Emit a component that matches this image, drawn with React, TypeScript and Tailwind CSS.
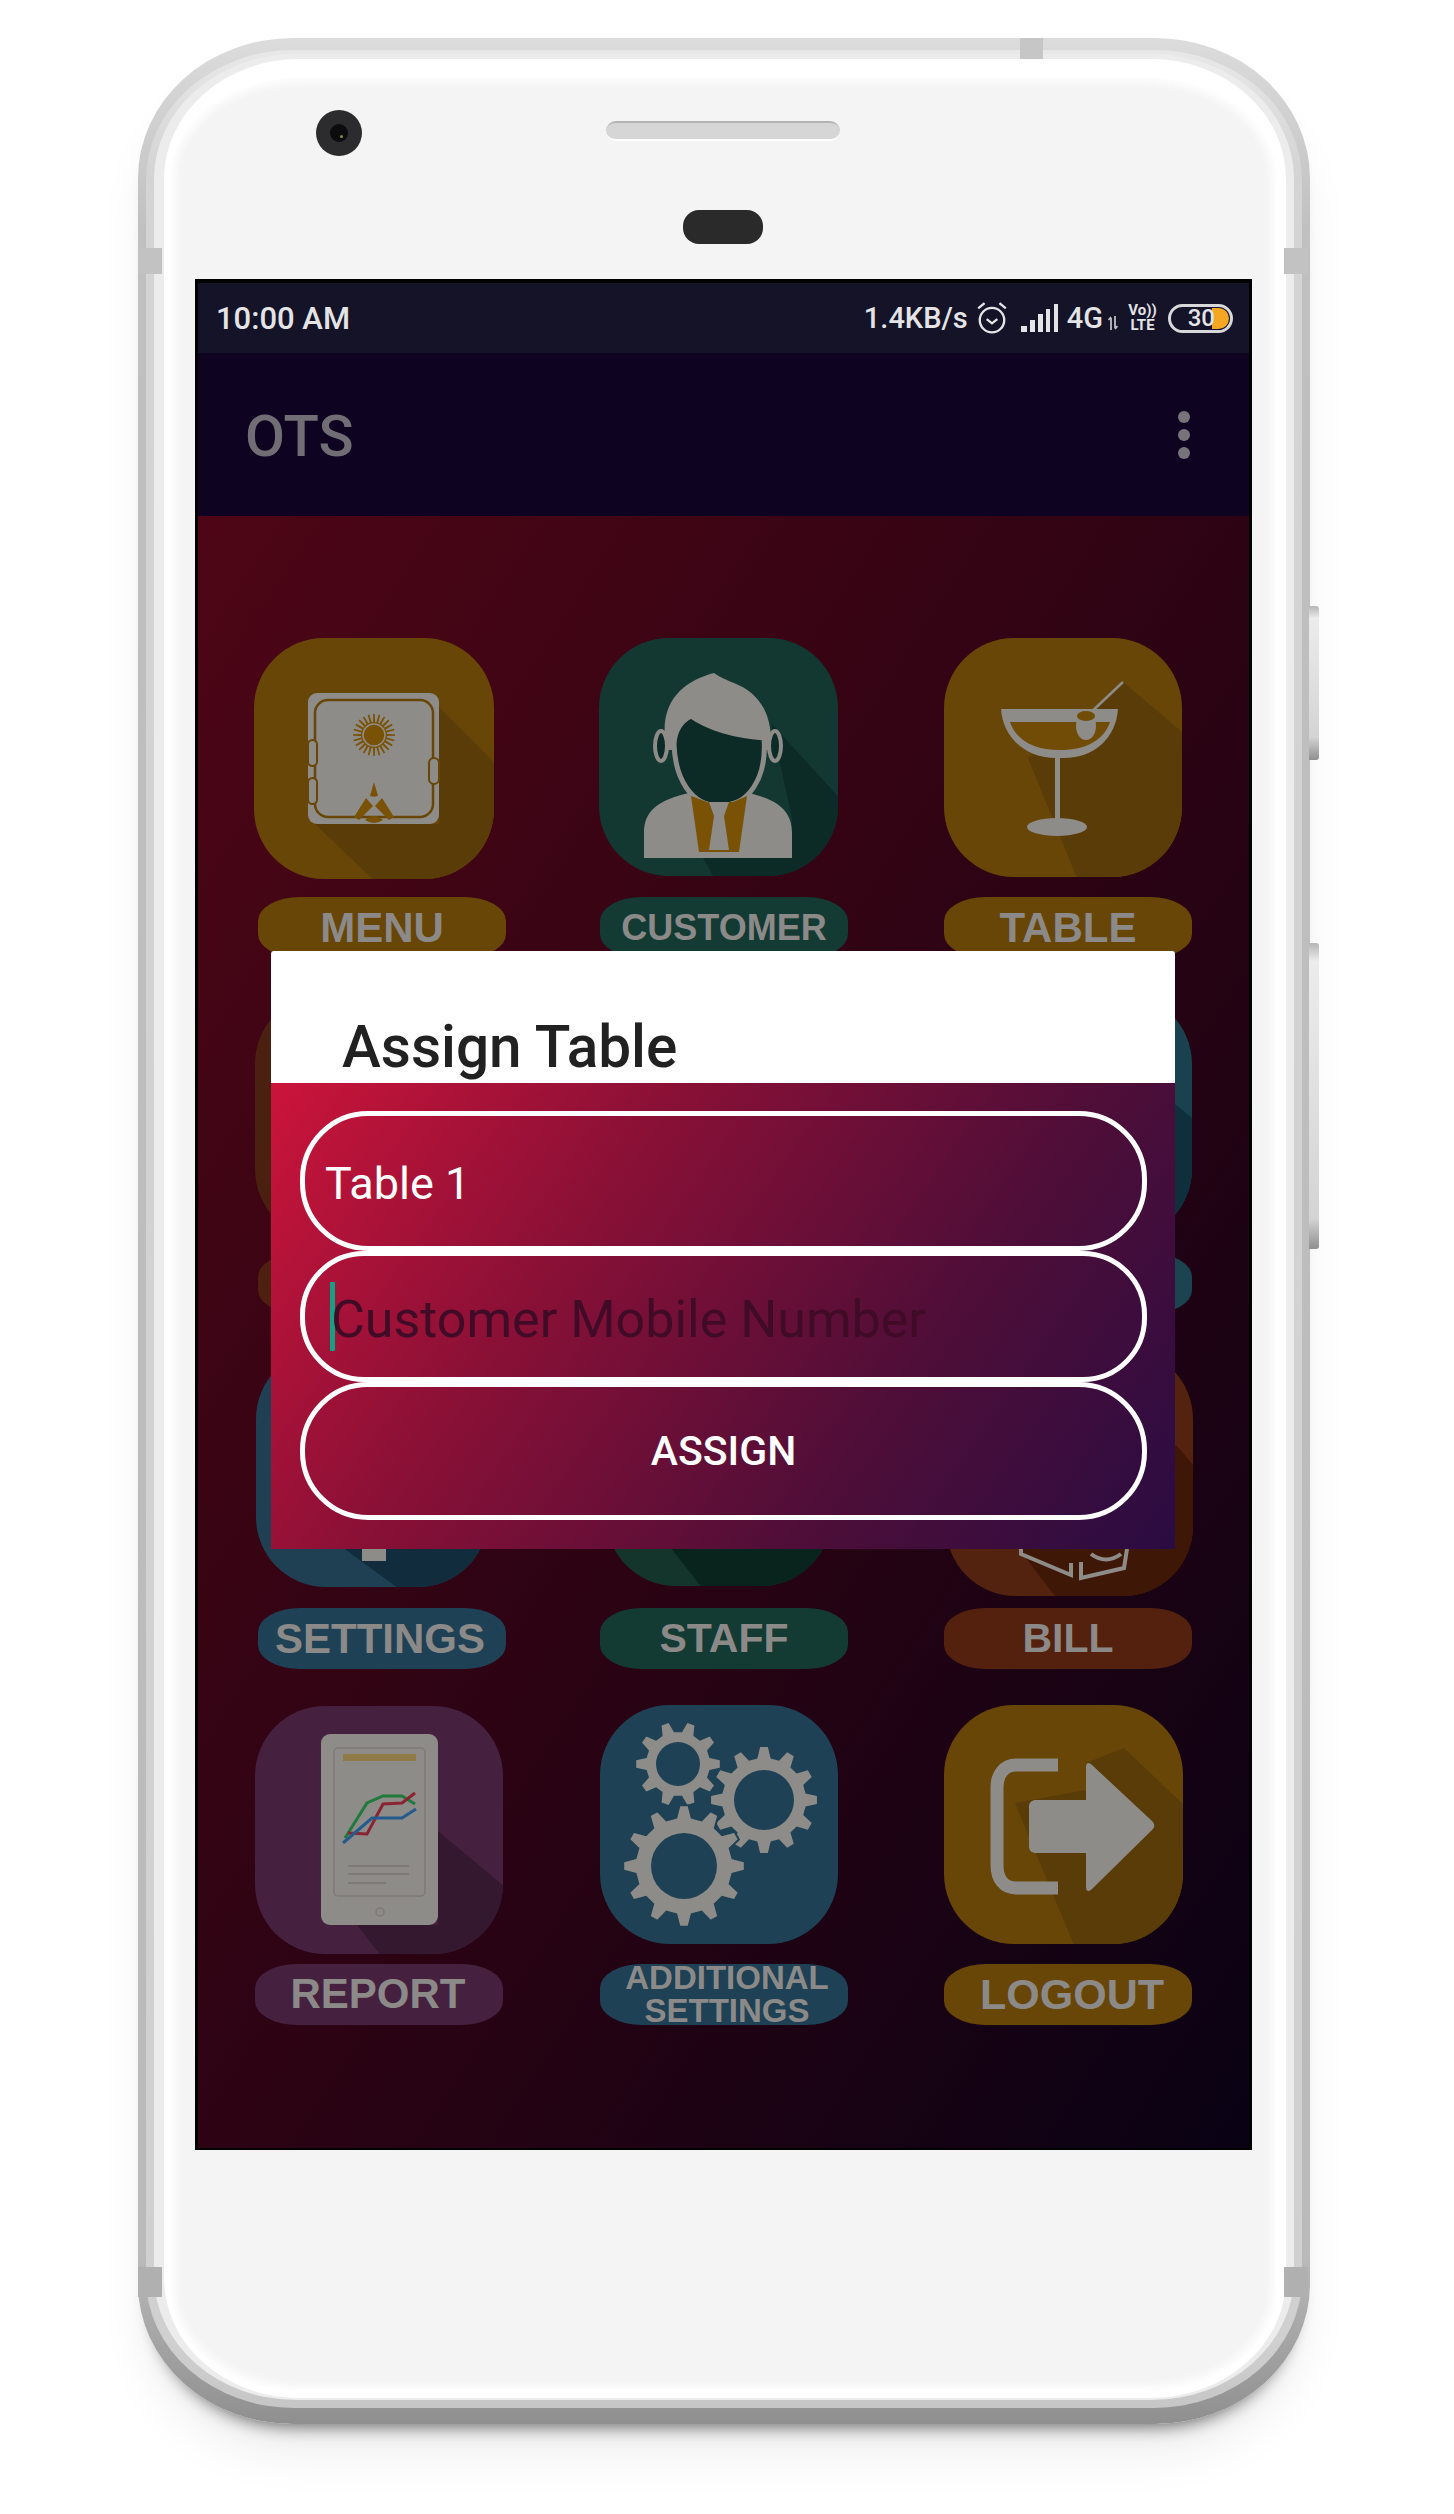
import React from "react";

const gearPath = (cx: number, cy: number, outer: number, inner: number, teeth: number) => {
  const step = (Math.PI * 2) / teeth;
  const pts: string[] = [];
  for (let i = 0; i < teeth; i++) {
    const a = i * step;
    const list: [number, number][] = [
      [a - step * 0.3, inner],
      [a - step * 0.14, outer],
      [a + step * 0.14, outer],
      [a + step * 0.3, inner],
    ];
    list.forEach(([ang, r]) => {
      pts.push(`${(cx + Math.cos(ang) * r).toFixed(1)} ${(cy + Math.sin(ang) * r).toFixed(1)}`);
    });
  }
  return `M${pts.join("L")}Z`;
};

const GREY = "#8e8c88";

const SafeIcon = () => (
  <svg viewBox="0 0 240 241" className="block h-full w-full">
    <polygon points="185,69 250,134 250,250 128,250 61,186 185,186" fill="#5a3c08" />
    <rect x="54" y="55" width="131" height="131" rx="9" fill={GREY} />
    <rect x="61" y="62" width="118" height="117" rx="13" fill="none" stroke="#684608" strokeWidth="2.5" />
    <rect x="54" y="102" width="9" height="26" rx="4.5" fill={GREY} stroke="#684608" strokeWidth="2" />
    <rect x="54" y="140" width="9" height="26" rx="4.5" fill={GREY} stroke="#684608" strokeWidth="2" />
    <rect x="175" y="120" width="10" height="26" rx="5" fill={GREY} stroke="#684608" strokeWidth="2" />
    <path d={gearPath(120, 97, 21, 13, 24)} fill="#7a5206" />
    <circle cx="120" cy="97" r="11" fill="none" stroke={GREY} strokeWidth="1.5" />
    <path d="M120 144l4 14a12 12 0 0 1 -8 0z M112 160l-12 19 5 3 14-14z M128 160l12 19-5 3-14-14z M111 182q9 -8 18 0q-9 6 -18 0z" fill="#7a5206" />
  </svg>
);

const CustomerIcon = () => (
  <svg viewBox="0 0 239 238" className="block h-full w-full">
    <polygon points="172,85 245,165 245,245 118,245 104,220 193,220 193,180" fill="#0d2b26" />
    <path d="M66 100C62 60 88 42 115 35C122 40 128 42 135 45C160 55 174 75 172 112L66 112Z" fill={GREY} />
    <ellipse cx="62" cy="108" rx="6" ry="15" fill="#0d2b26" stroke={GREY} strokeWidth="4" />
    <ellipse cx="176" cy="108" rx="6" ry="15" fill="#0d2b26" stroke={GREY} strokeWidth="4" />
    <path d="M75 106C76 90 84 82 92 78C112 92 140 98 165 100C168 140 150 168 120 168C92 168 76 140 75 106Z" fill="#0d2b26" stroke={GREY} strokeWidth="5" />
    <path d="M45 220V195C45 172 60 162 90 155C105 168 135 168 150 155C178 162 193 172 193 195V220Z" fill={GREY} />
    <path d="M92 158L100 214H140L148 158L134 164H108Z" fill="#7a5206" />
    <path d="M110 164H130L125 178L130 212H110L115 178Z" fill={GREY} />
  </svg>
);

const CocktailIcon = () => (
  <svg viewBox="0 0 238 239" className="block h-full w-full">
    <polygon points="179,44 245,100 245,245 135,245 84,120 142,79" fill="#5a3c08" />
    <path d="M57 71H174C172 100 150 120 120 120H112C82 120 59 100 57 71Z" fill={GREY} />
    <path d="M66 84H166C160 102 142 112 116 112C90 112 72 102 66 84Z" fill="#714c07" />
    <rect x="111" y="118" width="5" height="68" fill={GREY} />
    <ellipse cx="113" cy="189" rx="30" ry="9" fill={GREY} />
    <path d="M179 44L142 79" stroke={GREY} strokeWidth="2.5" />
    <ellipse cx="142" cy="88" rx="10" ry="14" fill={GREY} />
    <ellipse cx="142" cy="78" rx="9" ry="5" fill="#714c07" />
  </svg>
);

const ReportIcon = () => (
  <svg viewBox="0 0 248 248" className="block h-full w-full">
    <polygon points="183,125 255,185 255,255 130,255 102,219 183,219" fill="#34182f" />
    <rect x="66" y="28" width="117" height="191" rx="9" fill={GREY} />
    <rect x="79" y="42" width="91" height="148" rx="4" fill="none" stroke="#7d7a76" strokeWidth="1.5" />
    <rect x="88" y="48" width="73" height="7" fill="#8f7a48" />
    <polyline points="90,132 112,97 128,90 147,90 160,98" fill="none" stroke="#1f7a3c" strokeWidth="3" />
    <polyline points="93,127 112,128 128,98 147,97 160,87" fill="none" stroke="#8a2433" strokeWidth="3" />
    <polyline points="88,137 117,112 147,112 161,103" fill="none" stroke="#255a8c" strokeWidth="3" />
    <path d="M93 160H154M93 168H154M93 177H131" stroke="#7d7a76" strokeWidth="2" />
    <circle cx="125" cy="206" r="4" fill="none" stroke="#7d7a76" strokeWidth="1.5" />
  </svg>
);

const GearsIcon = () => (
  <svg viewBox="0 0 238 239" className="block h-full w-full">
    <path d={gearPath(78, 59, 42, 32, 10)} fill={GREY} />
    <circle cx="78" cy="59" r="22" fill="#1f4155" />
    <path d={gearPath(164, 95, 53, 42, 12)} fill={GREY} />
    <circle cx="164" cy="95" r="30" fill="#1f4155" />
    <path d={gearPath(84, 161, 61, 49, 12)} fill={GREY} stroke="#1f4155" strokeWidth="2" />
    <circle cx="84" cy="161" r="33" fill="#1f4155" />
  </svg>
);

const LogoutIcon = () => (
  <svg viewBox="0 0 239 239" className="block h-full w-full">
    <polygon points="71,98 142,85 142,58 180,43 245,105 245,245 132,245" fill="#5a3c08" />
    <path d="M114 60H72C60 60 53 70 53 82V160C53 174 60 183 72 183H114" fill="none" stroke={GREY} strokeWidth="13" />
    <path d="M85 102C85 97 88 95 92 95H142V62C142 57 145 57 148 60L208 116C211 119 211 122 208 125L148 184C145 187 142 187 142 182V148H92C88 148 85 146 85 141Z" fill={GREY} />
  </svg>
);

const SettingsBit = () => (
  <svg viewBox="0 0 232 238" className="block h-full w-full">
    <polygon points="75,190 150,245 240,245 240,160 120,160" fill="#102c3d" />
    <rect x="106" y="190" width="24" height="22" fill={GREY} />
  </svg>
);

const StaffBit = () => (
  <svg viewBox="0 0 225 237" className="block h-full w-full">
    <polygon points="50,180 101,245 235,245 235,180" fill="#09241c" />
  </svg>
);

const BillBit = () => (
  <svg viewBox="0 0 247 247" className="block h-full w-full">
    <polygon points="65,190 115,255 255,255 255,125 231,97 150,97" fill="#3f1706" />
    <path d="M75 200V205L125 226V214M135 213V229L178 219L181 200" fill="none" stroke={GREY} strokeWidth="4" />
    <path d="M145 205Q160 216 175 205" fill="none" stroke={GREY} strokeWidth="4" />
  </svg>
);

const TealBit = () => (
  <svg viewBox="0 0 248 250" className="block h-full w-full">
    <polygon points="120,20 255,130 255,255 150,255 80,160" fill="#0e2f3b" />
  </svg>
);

const rows = [
  { tile: "h-[241px] w-[240px] mb-[18px] bg-[#684608]", label: "ml-[4px] bg-[#684608] text-[42px]", text: "MENU", icon: <SafeIcon /> },
  { tile: "h-[238px] w-[239px] mb-[21px] bg-[#133832]", label: "ml-[1px] bg-[#133a33] text-[36px]", text: "CUSTOMER", icon: <CustomerIcon /> },
  { tile: "h-[239px] w-[238px] mb-[20px] bg-[#684608]", label: "bg-[#684608] text-[42px]", text: "TABLE", icon: <CocktailIcon /> },
  { tile: "h-[250px] w-[250px] mb-[14px] ml-[1px] bg-[#4a2010]", label: "ml-[4px] bg-[#4d2010] text-[41px]", text: "", icon: null },
  { tile: "h-[240px] w-[238px] mb-[14px] ml-[1px] bg-[#133832]", label: "ml-[1px] bg-[#133a33] text-[41px]", text: "", icon: null },
  { tile: "h-[250px] w-[248px] mb-[14px] bg-[#1a414e]", label: "bg-[#1c4450] text-[41px]", text: "", icon: <TealBit /> },
  { tile: "h-[238px] w-[232px] mb-[21px] ml-[2px] bg-[#1f4053]", label: "ml-[4px] pr-[4px] bg-[#1f4155] text-[42px]", text: "SETTINGS", icon: <SettingsBit /> },
  { tile: "h-[237px] w-[225px] mb-[22px] ml-[7px] bg-[#14352c]", label: "ml-[1px] bg-[#133a33] text-[41px]", text: "STAFF", icon: <StaffBit /> },
  { tile: "h-[247px] w-[247px] mb-[12px] ml-[2px] bg-[#54230f]", label: "bg-[#54210f] text-[41px]", text: "BILL", icon: <BillBit /> },
  { tile: "h-[248px] w-[248px] mb-[10px] ml-[1px] bg-[#46213f]", label: "ml-[1px] pr-[2px] bg-[#46213f] text-[42px]", text: "REPORT", icon: <ReportIcon /> },
  { tile: "h-[239px] w-[238px] mb-[20px] ml-[1px] bg-[#1f4155]", label: "ml-[1px] pl-[10px] pr-[4px] bg-[#1f4155] text-[33px] leading-[27px]", text: "ADDITIONAL SETTINGS", icon: <GearsIcon /> },
  { tile: "h-[239px] w-[239px] mb-[20px] bg-[#684608]", label: "pl-[8px] bg-[#684608] text-[43px]", text: "LOGOUT", icon: <LogoutIcon /> },
];

const StatusBar = () => (
  <div className="flex h-[70px] items-center justify-between bg-[#151328] pl-[18px] pr-[16px] font-['Roboto',sans-serif] font-medium text-[#e4e4e6]">
    <span className="text-[31px] leading-none">10:00 AM</span>
    <div className="flex items-center">
      <span className="text-[29px] leading-none">1.4KB/s</span>
      <svg viewBox="0 0 32 32" className="ml-[7px] h-[34px] w-[34px]" fill="none" stroke="#e4e4e6" strokeWidth="2.2">
        <circle cx="16" cy="18" r="11.5" />
        <path d="M11 17l5 4 5-4" />
        <path d="M3 7l6-5M29 7l-6-5" />
      </svg>
      <svg viewBox="0 0 38 28" className="ml-[12px] h-[28px] w-[38px]" fill="#e4e4e6">
        <rect x="0" y="22" width="6" height="6" />
        <rect x="9" y="16" width="5" height="12" />
        <rect x="17" y="10" width="5" height="18" />
        <rect x="25" y="5" width="4" height="23" />
        <rect x="33" y="0" width="4" height="28" />
      </svg>
      <span className="ml-[8px] text-[29px] leading-none">4G</span>
      <svg viewBox="0 0 10 14" className="ml-[5px] mt-[10px] h-[14px] w-[10px]" stroke="#bdbdc2" strokeWidth="1.8" fill="none">
        <path d="M3 14V2M0.5 4L3 1M7 0V12M9.5 10L7 13" />
      </svg>
      <div className="ml-[8px] flex w-[33px] flex-col items-center text-[15px] font-bold leading-[15px]">
        <span>Vo))</span>
        <span>LTE</span>
      </div>
      <div className="ml-[9px] flex h-[29px] w-[65px] items-center justify-end overflow-hidden rounded-full border-[3px] border-[#d8d8da] pr-[1px]">
        <span className="z-10 -mr-[3px] text-[24px] leading-none">30</span>
        <div className="h-[21px] w-[17px] rounded-r-full bg-[#f5a623]" />
      </div>
    </div>
  </div>
);

const AppBar = () => (
  <div className="flex h-[163px] items-center justify-between bg-[#0e0320] pl-[47px] pr-[59px]">
    <span className="mt-[2px] font-['Roboto',sans-serif] text-[58px] font-medium leading-none text-[#716d75]">OTS</span>
    <div className="flex flex-col gap-[6px]">
      <div className="h-[12px] w-[12px] rounded-full bg-[#77737a]" />
      <div className="h-[12px] w-[12px] rounded-full bg-[#77737a]" />
      <div className="h-[12px] w-[12px] rounded-full bg-[#77737a]" />
    </div>
  </div>
);

const Dialog = () => (
  <div className="absolute left-[73px] top-[435px] w-[904px] font-['Roboto',sans-serif]">
    <div className="flex h-[132px] items-end rounded-t-[3px] bg-white pb-[3px] pl-[71px]">
      <h2 className="text-[58.5px] font-medium leading-[66px] text-[#212121]">Assign Table</h2>
    </div>
    <div className="h-[466px] bg-[linear-gradient(125deg,#cb143a_0%,#8a1036_33%,#4f0e38_68%,#2a0c42_100%)] pl-[29px] pt-[28px]">
      <div className="flex h-[140px] w-[847px] items-center rounded-[68px] border-[5px] border-white pl-[20px] pt-[5px] text-[45px] text-white">
        Table 1
      </div>
      <div className="flex h-[131px] w-[847px] items-center rounded-[64px] border-[5px] border-white pl-[25px]">
        <div className="h-[69px] w-[5px] bg-[#14a085]" />
        <span className="-ml-[4px] mt-[6px] text-[52px] leading-none text-[#400b26]">Customer Mobile Number</span>
      </div>
      <button className="flex h-[138px] w-[847px] items-center justify-center rounded-[68px] border-[5px] border-white pt-[2px] text-[41px] font-medium text-white">
        ASSIGN
      </button>
    </div>
  </div>
);

const Screen = () => (
  <div className="ml-[24px] flex h-[1871px] w-[1057px] flex-col border-x-[3px] border-b-2 border-t-4 border-black">
    <StatusBar />
    <AppBar />
    <div className="relative flex-1 bg-[linear-gradient(to_bottom_right,#4e0616,#2a0313_55%,#090214)] pl-[56px] pt-[122px]">
      <div className="grid grid-cols-[345px_345px_345px] gap-y-[35.5px]">
        {rows.map((item, index) => (
          <div key={index} className="flex h-[320px] flex-col justify-end">
            <div className={`overflow-hidden rounded-[70px] ${item.tile}`}>{item.icon}</div>
            <div
              className={`flex h-[61px] w-[248px] items-center justify-center rounded-[42px/24px] text-center font-['Liberation_Sans',sans-serif] font-bold leading-none text-[#8c8a88] ${item.label}`}
            >
              {item.text}
            </div>
          </div>
        ))}
      </div>
      <Dialog />
    </div>
  </div>
);

const App = () => {
  return (
    <div className="h-[2514px] w-[1454px] overflow-hidden bg-white pl-[138px] pt-[38px]">
      <div className="relative h-[2386px] w-[1172px]">
        {/* side keys */}
        <div className="absolute -right-[9px] top-[568px] h-[154px] w-[10px] rounded-r-[3px] bg-[linear-gradient(to_bottom,#b5b5b5,#ececec_8%,#d4d4d4_85%,#8f8f8f)]" />
        <div className="absolute -right-[9px] top-[905px] h-[306px] w-[10px] rounded-r-[3px] bg-[linear-gradient(to_bottom,#b5b5b5,#ececec_6%,#d4d4d4_90%,#8f8f8f)]" />
        <div className="h-full w-full rounded-[155px/140px] bg-[linear-gradient(to_bottom,#dcdcdc,#c0c0c0_8%,#bababa_93%,#8f8f8f)] pb-[16px] pl-[8px] pr-[8px] pt-[12px] shadow-[0_18px_18px_-16px_rgba(0,0,0,0.6),0_36px_50px_-8px_rgba(0,0,0,0.07)]">
          <div className="h-full w-full rounded-[148px/130px] bg-[linear-gradient(to_bottom,#e8e8e8,#d4d4d4_5%,#d0d0d0_97%,#c6c6c6)] pb-[8px] pl-[8px] pr-[8px] pt-[4px]">
            <div className="h-full w-full rounded-[142px/125px] bg-[#ececec] pb-[2px] pl-[10px] pr-[8px] pt-[5px]">
              <div className="h-full w-full rounded-[135px/120px] bg-white pb-[8px] pl-[7px] pr-[10px] pt-[19px]">
                <div className="h-full w-full rounded-[130px/100px] bg-[#f4f4f4] shadow-[inset_0_0_10px_4px_#ffffff]">
                  <div className="flex items-center pl-[145px] pt-[32px]">
                    <div className="flex h-[46px] w-[46px] items-center justify-center rounded-full bg-[#2c2c2e]">
                      <div className="h-[18px] w-[18px] rounded-full bg-[#0c0c0e]">
                        <div className="ml-[10px] mt-[11px] h-[3px] w-[3px] rounded-full bg-[#8c8f3a]" />
                      </div>
                    </div>
                    <div className="mb-[4px] ml-[244px] h-[20px] w-[234px] rounded-full border-b-2 border-t-2 border-b-white border-t-[#b4b4b4] bg-[#d6d6d6]" />
                  </div>
                  <div className="ml-[512px] mt-[54px] h-[34px] w-[80px] rounded-[16px] bg-[#2a2a2a]" />
                  <div className="mt-[35px]">
                    <Screen />
                  </div>
                </div>
              </div>
            </div>
          </div>
        </div>
        {/* antenna bands and the top notch */}
        <div className="absolute left-0 top-[210px] h-[26px] w-[24px] bg-[#c2c2c2]" />
        <div className="absolute right-[2px] top-[210px] h-[26px] w-[24px] bg-[#c2c2c2]" />
        <div className="absolute left-0 top-[2229px] h-[30px] w-[24px] bg-[#b0b0b0]" />
        <div className="absolute right-[2px] top-[2229px] h-[30px] w-[24px] bg-[#b0b0b0]" />
        <div className="absolute left-[882px] top-0 h-[21px] w-[23px] bg-[#c6c6c6]" />
      </div>
    </div>
  );
};

export default App;
